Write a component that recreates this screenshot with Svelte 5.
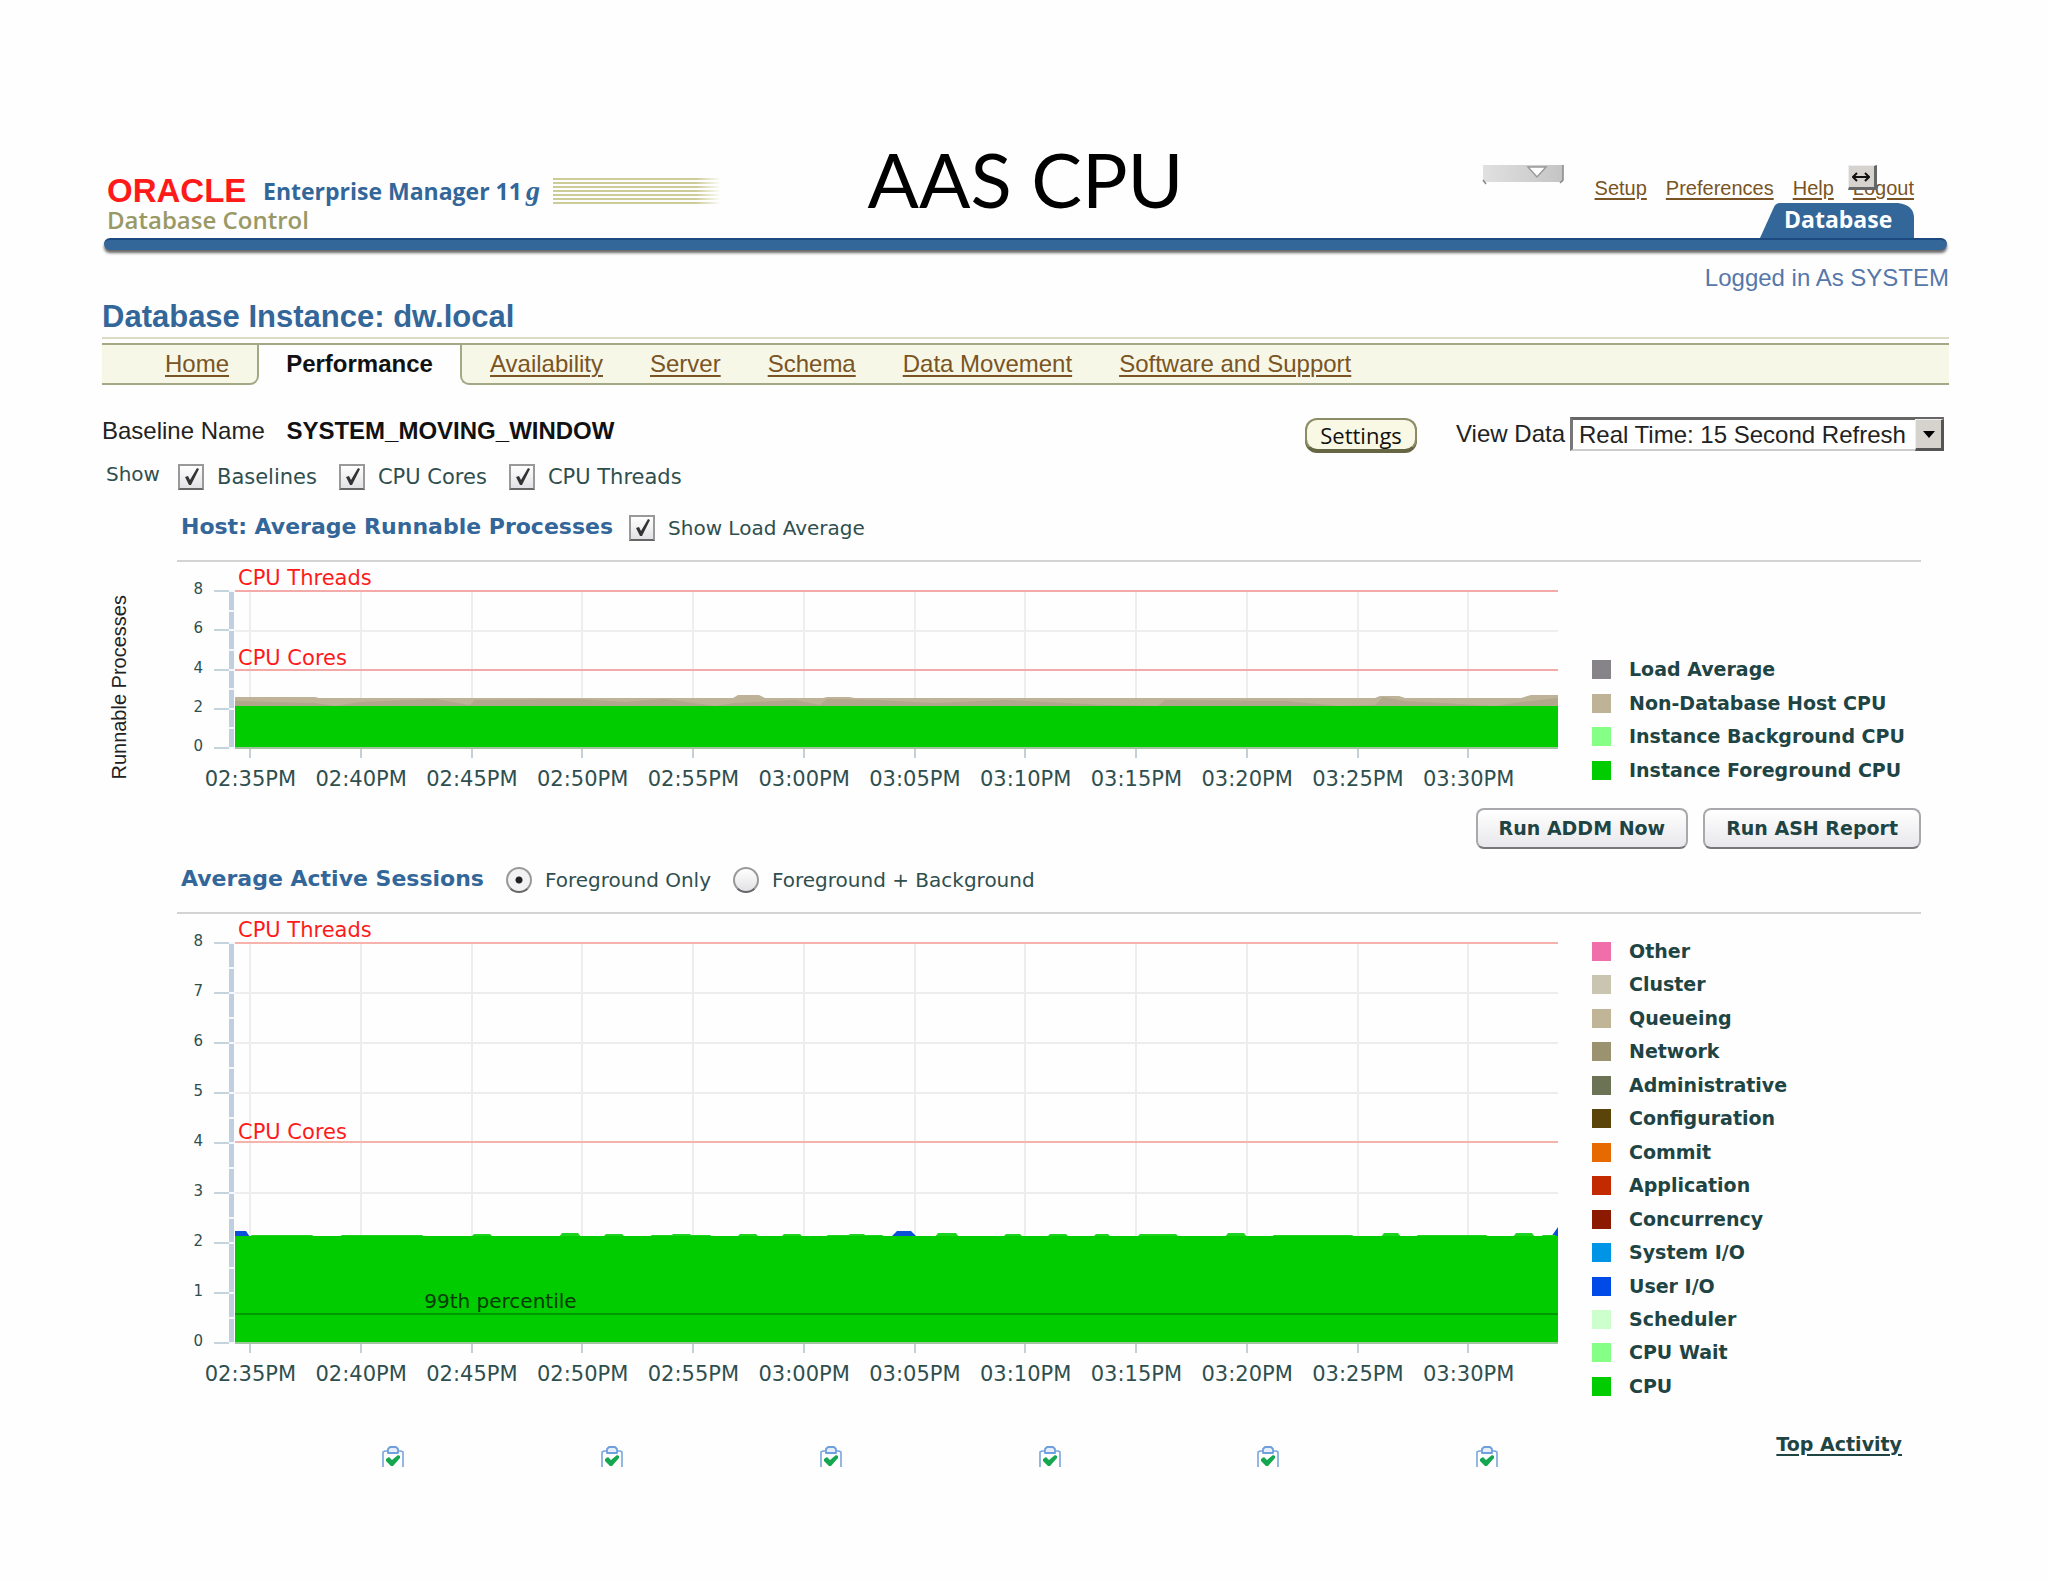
<script>
  const links = ['Setup', 'Preferences', 'Help'];
  const tabs = ['Availability', 'Server', 'Schema', 'Data Movement', 'Software and Support'];
  const times = ['02:35PM', '02:40PM', '02:45PM', '02:50PM', '02:55PM', '03:00PM', '03:05PM', '03:10PM', '03:15PM', '03:20PM', '03:25PM', '03:30PM'];
  const gridX = times.map((_, i) => Math.round(14 + i * 110.75));
  const stripes = [0, 4, 8, 12, 16, 20, 24];

  const hostLegend = [
    ['Load Average', '#868488'],
    ['Non-Database Host CPU', '#bfb397'],
    ['Instance Background CPU', '#86ff86'],
    ['Instance Foreground CPU', '#00cc00']
  ];
  const sessionLegend = [
    ['Other', '#f06eaa'],
    ['Cluster', '#c9c5b1'],
    ['Queueing', '#c0b597'],
    ['Network', '#9b9370'],
    ['Administrative', '#6c7355'],
    ['Configuration', '#5a440a'],
    ['Commit', '#e66a00'],
    ['Application', '#c42a00'],
    ['Concurrency', '#8b1a00'],
    ['System I/O', '#0094e7'],
    ['User I/O', '#004ae7'],
    ['Scheduler', '#ccffcc'],
    ['CPU Wait', '#86ff86'],
    ['CPU', '#00cc00']
  ];

  const bumps = [
    [14, 80, 1], [104, 190, 1], [236, 258, 2], [324, 346, 3], [368, 390, 2], [414, 478, 1],
    [435, 458, 2], [502, 524, 2], [546, 568, 2], [590, 650, 1], [612, 632, 2], [700, 724, 3],
    [768, 788, 2], [812, 834, 2], [858, 876, 2], [902, 944, 2], [990, 1012, 3], [1036, 1120, 1],
    [1146, 1166, 3], [1180, 1254, 1], [1278, 1300, 3], [1305, 1323, 1]
  ];
</script>

{#snippet check(text)}
  <label class="choice">
    <span class="tick">
      <input type="checkbox" checked />
      <svg viewBox="0 0 26 26" aria-hidden="true"><path d="M7 13 L10 12 L12 16 L19 4 L21 5 L13 21 L11 21 Z" fill="#333" /></svg>
    </span>
    {text}
  </label>
{/snippet}

{#snippet legend(items)}
  <ul class="legend">
    {#each items as [name, colour]}
      <li><span class="swatch" style:background={colour}></span>{name}</li>
    {/each}
  </ul>
{/snippet}

{#snippet timeAxis()}
  <div class="times">
    {#each times as t}<span>{t}</span>{/each}
  </div>
{/snippet}

{#snippet axis(h, max, step)}
  <svg class="axis" viewBox="0 0 21 {h}" aria-hidden="true">
    <rect x="15" y="0" width="5" height={h} fill="#bfcfe0" />
    {#each Array(max / step + 1) as _, i}
      <rect x="0" y={Math.round((i * h * step) / max) - 1} width="15" height="2" fill="#c5d3dc" />
    {/each}
    {#each Array((max / step) * 2 + 1) as _, i}
      <rect x="15" y={Math.round((i * h * step) / max / 2) - 1} width="6" height="2" fill="#f4f8fc" />
    {/each}
  </svg>
{/snippet}

<div class="page">
  <header>
    <div class="brand">
      <div class="line">
        <span class="oracle">ORACLE</span>
        <span class="product">Enterprise Manager 11<i>g</i></span>
        <svg class="stripes" viewBox="0 0 168 26" aria-hidden="true">
          <defs>
            <linearGradient id="fade"><stop offset="0.85" stop-color="#cccc99" /><stop offset="1" stop-color="#cccc99" stop-opacity="0" /></linearGradient>
          </defs>
          {#each stripes as y}<rect x="0" {y} width="168" height="2" fill="url(#fade)" />{/each}
        </svg>
      </div>
      <div class="control">Database Control</div>
    </div>
    <div class="title">AAS CPU</div>
    <div class="tools">
      <div class="links">
        <svg class="handle" viewBox="0 0 82 20" aria-hidden="true">
          <defs><linearGradient id="grip"><stop offset="0" stop-color="#e0e0e0" /><stop offset="0.6" stop-color="#d0d0d0" /><stop offset="1" stop-color="#c4c4c4" /></linearGradient></defs>
          <rect x="1" y="0" width="80" height="17" fill="url(#grip)" />
          <path d="M1 15 L4 19 M81 0 V15 L78 18" stroke="#888" stroke-width="1.5" fill="none" />
          <path d="M46 2 H64 L55 12 Z" fill="#fff" stroke="#999" stroke-width="1.5" />
        </svg>
        {#each links as l}<a href="#top">{l}</a>{/each}
        <span class="logout">
          <a href="#top">Logout</a>
          <button class="resize" aria-label="Resize">
            <svg viewBox="0 0 18 12"><path d="M1 6 H17 M5 2 L1 6 L5 10 M13 2 L17 6 L13 10" fill="none" stroke="#111" stroke-width="2" /></svg>
          </button>
        </span>
      </div>
      <div class="maintab">
        <svg viewBox="0 0 154 36" preserveAspectRatio="none" aria-hidden="true"><path d="M0 36 L14 5 Q16 1 20 1 H138 Q154 3 154 16 V36 Z" fill="#336699" /></svg>
        <span>Database</span>
      </div>
    </div>
  </header>
  <div class="bar"></div>
  <div class="user">Logged in As SYSTEM</div>
  <h1>Database Instance: dw.local</h1>

  <nav>
    <div class="first"><a href="#home">Home</a></div>
    <div class="active">Performance</div>
    <div class="rest">{#each tabs as t}<a href="#tab">{t}</a>{/each}</div>
  </nav>

  <div class="filters">
    <div class="baseline">Baseline Name <b>SYSTEM_MOVING_WINDOW</b></div>
    <button class="settings">Settings</button>
    <label class="view" for="refresh">View Data</label>
    <div class="select">
      <select id="refresh"><option>Real Time: 15 Second Refresh</option></select>
      <span class="drop"><svg viewBox="0 0 12 8" aria-hidden="true"><path d="M0 1 H12 L6 8 Z" fill="#000" /></svg></span>
    </div>
  </div>

  <div class="show">
    <span>Show</span>
    {@render check('Baselines')}
    {@render check('CPU Cores')}
    {@render check('CPU Threads')}
  </div>

  <section>
    <div class="side"><span>Runnable Processes</span></div>
    <div class="panel">
      <div class="head">
        <h2>Host: Average Runnable Processes</h2>
        {@render check('Show Load Average')}
      </div>
      <div class="chart">
        <div class="scale host">{#each [8, 6, 4, 2, 0] as n}<span>{n}</span>{/each}</div>
        {@render axis(157, 8, 2)}
        <div class="plotcol">
          <div class="plot host">
            <svg viewBox="0 0 1323 167" preserveAspectRatio="none" aria-hidden="true">
              <g fill="#efeeee">
                {#each [39, 118] as y}<rect x="0" {y} width="1323" height="2" />{/each}
                {#each gridX as x}<rect {x} y="0" width="2" height="157" />{/each}
              </g>
              <path d="M0 106 H80 L84 107 H498 L503 104 H524 L530 107 H588 L592 106 H614 L620 107 H1140 L1145 105 H1164 L1170 107 H1286 L1296 104 H1323 V118 H0 Z" fill="#beb298" />
              <path d="M0 110 L80 112 L100 115 L125 111 L200 108 L235 114 L240 109 L340 108 L390 111 L430 108 L480 115 L500 112 L560 109 L585 114 L592 108 L640 109 L700 112 L770 109 L870 114 L923 115 L930 109 L1050 110 L1105 115 L1140 114 L1148 106 L1170 110 L1260 115 L1286 111 L1323 107 V116 H0 Z" fill="#b0a78c" />
              <rect x="0" y="115" width="1323" height="42" fill="#00cc00" />
              <rect x="0" y="156" width="1323" height="2" fill="#9fc49f" />
              <g fill="#f4aaa8">
                <rect x="0" y="-1" width="1323" height="2" />
                <rect x="0" y="78" width="1323" height="2" />
              </g>
              <g fill="#c5d0d6">{#each gridX as x}<rect {x} y="158" width="2" height="9" />{/each}</g>
            </svg>
            <span class="mark threads">CPU Threads</span>
            <span class="mark hostcores">CPU Cores</span>
          </div>
          {@render timeAxis()}
        </div>
        <div class="hostside">{@render legend(hostLegend)}</div>
      </div>
      <div class="actions">
        <button>Run ADDM Now</button>
        <button>Run ASH Report</button>
      </div>
    </div>
  </section>

  <section>
    <div class="side"></div>
    <div class="panel">
      <div class="head second">
        <h2>Average Active Sessions</h2>
        <label class="choice"><input type="radio" name="scope" checked />Foreground Only</label>
        <label class="choice"><input type="radio" name="scope" />Foreground + Background</label>
      </div>
      <div class="chart">
        <div class="scale sessions">{#each [8, 7, 6, 5, 4, 3, 2, 1, 0] as n}<span>{n}</span>{/each}</div>
        {@render axis(400, 8, 1)}
        <div class="plotcol">
          <div class="plot sessions">
            <svg viewBox="0 0 1323 410" preserveAspectRatio="none" aria-hidden="true">
              <g fill="#efecf0">
                {#each [49, 99, 149, 249, 299] as y}<rect x="0" {y} width="1323" height="2" />{/each}
                {#each gridX as x}<rect {x} y="0" width="2" height="400" />{/each}
              </g>
              <path d="M0 288 H11 L15 294 H0 Z M656 294 L662 288 H676 L682 294 Z M1316 294 L1323 284 V294 Z" fill="#0a50d8" />
              {#each bumps as [a, b, h]}
                <path d="M{a} 294 L{a + 3} {293 - h} H{b - 3} L{b} 294 Z" fill="#1fd21f" />
              {/each}
              <rect x="0" y="293" width="1323" height="107" fill="#00cc00" />
              <rect x="0" y="370" width="1323" height="2" fill="#009a00" />
              <rect x="0" y="399" width="1323" height="2" fill="#9fc49f" />
              <g fill="#f5b3ac">
                <rect x="0" y="-1" width="1323" height="2" />
                <rect x="0" y="198" width="1323" height="2" />
              </g>
              <g fill="#c5d0d6">{#each gridX as x}<rect {x} y="401" width="2" height="9" />{/each}</g>
            </svg>
            <span class="mark threads">CPU Threads</span>
            <span class="mark cores">CPU Cores</span>
            <span class="mark pct">99th percentile</span>
          </div>
          {@render timeAxis()}
        </div>
        <div class="sessionside">{@render legend(sessionLegend)}</div>
      </div>
    </div>
  </section>

  <footer>
    <div class="snaps">
      {#each Array(6) as _}
        <a href="#snapshot" aria-label="Snapshot">
          <svg viewBox="0 0 22 22">
            <path d="M1 21 V6 L3 5 H6 M16 5 H19 L21 6 V21" fill="none" stroke="#7aa5dc" stroke-width="1.6" />
            <path d="M6 7 V3 L8 1 H14 L16 3 V7 Z" fill="#e6effa" stroke="#6f9fdd" stroke-width="1.8" stroke-linejoin="round" />
            <path d="M4 13 L7 11 L10 14 L16 9 L18 10 V12 L11 20 H9 L4 15 Z" fill="#15a650" />
          </svg>
        </a>
      {/each}
    </div>
    <a class="top" href="#activity">Top Activity</a>
  </footer>
</div>

<style>
  :global(body) { margin: 0; background: #fefefe; }
  .page {
    padding: 144px 99px 112px 102px;
    font-family: 'Liberation Sans', Arial, sans-serif;
    font-size: 24px;
    line-height: 28px;
    color: #222;
  }
  a { color: #7a5424; text-underline-offset: 3px; text-decoration-thickness: 2px; }
  button { font: inherit; margin: 0; padding: 0; }

  header { display: grid; grid-template-columns: 1fr auto 1fr; height: 94px; }
  .brand { padding: 32px 0 0 5px; font: bold 23px/30px 'Open Sans', 'Noto Sans', sans-serif; color: #336699; }
  .line { display: flex; align-items: center; white-space: nowrap; }
  .oracle { width: 156px; font: bold 33px/30px 'Liberation Sans', sans-serif; color: #ff1a1a; }
  .product { width: 290px; }
  .product i { font-family: 'Liberation Serif', serif; font-size: 28px; line-height: 20px; margin-left: 4px; }
  .stripes { width: 168px; height: 26px; }
  .control { color: #999966; font-size: 24px; font-weight: 600; line-height: 28px; }
  .title { font: 76px/70px Lato, Carlito, sans-serif; color: #000; white-space: nowrap; }
  .tools { display: flex; flex-direction: column; align-items: flex-end; justify-content: space-between; padding: 21px 35px 0 0; }
  .links { display: flex; gap: 19px; font-size: 20px; line-height: 24px; }
  .links a { display: block; padding-top: 11px; }
  .handle { width: 82px; height: 20px; margin-right: 12px; }
  .logout { position: relative; }
  .resize {
    position: absolute; left: -5px; top: 0; width: 29px; height: 25px; background: #d6d3ce;
    border: solid; border-width: 1px 3px 3px 1px; border-color: #eee #666 #666 #eee; display: grid; place-items: center;
  }
  .resize svg { width: 18px; height: 12px; }
  .maintab { position: relative; width: 154px; height: 36px; color: #fff; font: bold 23px/35px 'Open Sans', sans-serif; }
  .maintab svg { position: absolute; inset: 0; width: 100%; height: 100%; }
  .maintab span { position: relative; padding-left: 24px; }
  .bar { height: 10px; background: #336699; border-top: 2px solid #1c4a80; border-radius: 6px; box-shadow: 0 3px 3px #666; margin: 0 2px; }
  .user { margin-top: 14px; text-align: right; color: #5577aa; }
  h1 { margin: 7px 0 0; font-size: 31px; line-height: 36px; color: #336699; }

  nav { display: flex; margin-top: 2px; border-top: 2px solid #dcdcc4; padding-top: 4px; white-space: nowrap; }
  nav > div { border-top: 2px solid #a5a884; border-bottom: 2px solid #a5a884; padding: 5px 0; }
  .first, .rest { background: #f7f7e7; }
  nav > .first { padding: 5px 28px 5px 63px; border-right: 2px solid #a5a884; border-bottom-right-radius: 9px; }
  nav > .active { border-bottom-color: transparent; font-weight: bold; color: #111; width: 201px; text-align: center; }
  nav > .rest { flex: 1; display: flex; gap: 47px; padding-left: 28px; border-left: 2px solid #a5a884; border-bottom-left-radius: 9px; }

  .filters { display: flex; align-items: flex-start; margin-top: 32px; padding-right: 5px; height: 36px; white-space: nowrap; }
  .baseline { flex: 1; }
  .baseline b { margin-left: 15px; color: #111; }
  .settings {
    margin: 1px 39px 0 0; width: 112px; height: 33px; border: 2px solid #8c8c66; border-bottom-color: #666644; border-radius: 12px;
    background: #f8f8e4; box-shadow: 0 2px 0 #666644; font: 22px/26px 'Open Sans', sans-serif; color: #111;
  }
  .view { padding: 3px 5px 0 0; }
  .select { position: relative; width: 374px; height: 34px; }
  select {
    appearance: none; width: 100%; height: 100%; padding: 0 0 0 6px; font: inherit; color: #222; background: #fff;
    border: solid; border-width: 3px 2px 2px 3px; border-color: #666 #777 #ccc #777; border-radius: 0;
  }
  .drop {
    position: absolute; right: 0; top: 2px; bottom: 0; width: 29px; box-sizing: border-box; background: #d6d3ce; pointer-events: none;
    border: solid; border-width: 1px 3px 3px 1px; border-color: #eee #555 #555 #eee; display: grid; place-items: center;
  }
  .drop svg { width: 12px; height: 8px; }

  .show, .head { display: flex; align-items: center; height: 26px; font: 20px/26px 'DejaVu Sans', sans-serif; color: #2f4f4f; white-space: nowrap; }
  .show { margin-top: 11px; gap: 22px; font-size: 21px; }
  .show > span { padding: 0 0 6px 4px; margin-right: -4px; font-size: 20px; }
  .choice { display: flex; align-items: center; gap: 13px; }
  .tick { position: relative; width: 26px; height: 26px; }
  .tick svg { position: absolute; inset: 0; pointer-events: none; }
  input { appearance: none; margin: 0; width: 26px; height: 26px; box-sizing: border-box; border: 2px solid #999; border-bottom-color: #666; background: linear-gradient(#fff, #e2e2e6); display: block; }
  input[type='radio'] { border-radius: 50%; }
  input[type='radio']:checked { background: radial-gradient(circle, #222 3px, #f2f2f4 4px); }

  section { display: grid; grid-template-columns: 75px minmax(0, 1fr); padding-right: 28px; }
  .side { padding: 105px 0 0 5px; font-size: 20px; line-height: 24px; color: #222; }
  .side span { writing-mode: vertical-rl; transform: rotate(180deg); white-space: nowrap; }
  .head { margin-top: 25px; padding: 0 0 19px 4px; gap: 16px; border-bottom: 2px solid #d4d4d4; }
  .head.second { margin-top: 18px; gap: 22px; }
  h2 { margin: 0; font-size: 22px; line-height: 22px; color: #336699; padding-bottom: 3px; }
  .chart { display: flex; padding-top: 29px; font-family: 'DejaVu Sans', sans-serif; color: #2f4f4f; }
  .scale { width: 26px; margin: -12px 11px 0 0; display: flex; flex-direction: column; justify-content: space-between; text-align: right; font-size: 15px; line-height: 20px; }
  .scale.host { height: 177px; }
  .scale.sessions { height: 420px; }
  .axis { width: 21px; flex: none; align-self: flex-start; overflow: visible; }
  .plotcol { flex: 1; min-width: 0; }
  .plot { position: relative; }
  .plot svg { display: block; width: 100%; height: 100%; overflow: visible; }
  .plot.host { height: 167px; }
  .plot.sessions { height: 410px; }
  .mark { position: absolute; left: 3px; font-size: 21px; line-height: 24px; color: #ff1a1a; white-space: nowrap; }
  .threads { top: -25px; }
  .hostcores { top: 55px; }
  .cores { top: 177px; }
  .pct { top: 346px; left: 14%; padding-left: 4px; font-size: 20px; color: #053a05; }
  .times { display: grid; grid-template-columns: repeat(12, 1fr); margin: 9px 34px 0 -40px; font-size: 21px; line-height: 24px; text-align: center; }
  .hostside, .sessionside { width: 329px; padding-left: 34px; }
  .hostside { padding-top: 69px; height: 120px; }
  .sessionside { height: 454px; margin-top: -1px; }
  .legend { height: 100%; margin: 0; padding: 0; list-style: none; display: flex; flex-direction: column; justify-content: space-between; font-size: 19px; line-height: 19px; font-weight: bold; color: #1f4444; white-space: nowrap; }
  .legend li { display: flex; gap: 18px; }
  .swatch { width: 19px; height: 19px; }
  .actions { display: flex; justify-content: flex-end; gap: 15px; margin-top: 17px; font: bold 19px/24px 'DejaVu Sans', sans-serif; }
  .actions button {
    padding: 6px 21px 7px; height: 41px; color: #1f4444; border: 2px solid #a9a9ad; border-bottom-color: #77777b;
    border-radius: 8px; background: linear-gradient(#fff, #e8e8ec); white-space: nowrap;
  }

  footer { display: flex; margin-top: 36px; padding-right: 47px; align-items: flex-start; justify-content: space-between; }
  .snaps { flex: 1; display: grid; grid-template-columns: repeat(6, 1fr); margin: 14px 180px 0 182px; justify-items: center; }
  .snaps a, .snaps svg { display: block; width: 22px; height: 22px; }
  .top { font: bold 19px/24px 'DejaVu Sans', sans-serif; color: #1f4444; white-space: nowrap; }
</style>
